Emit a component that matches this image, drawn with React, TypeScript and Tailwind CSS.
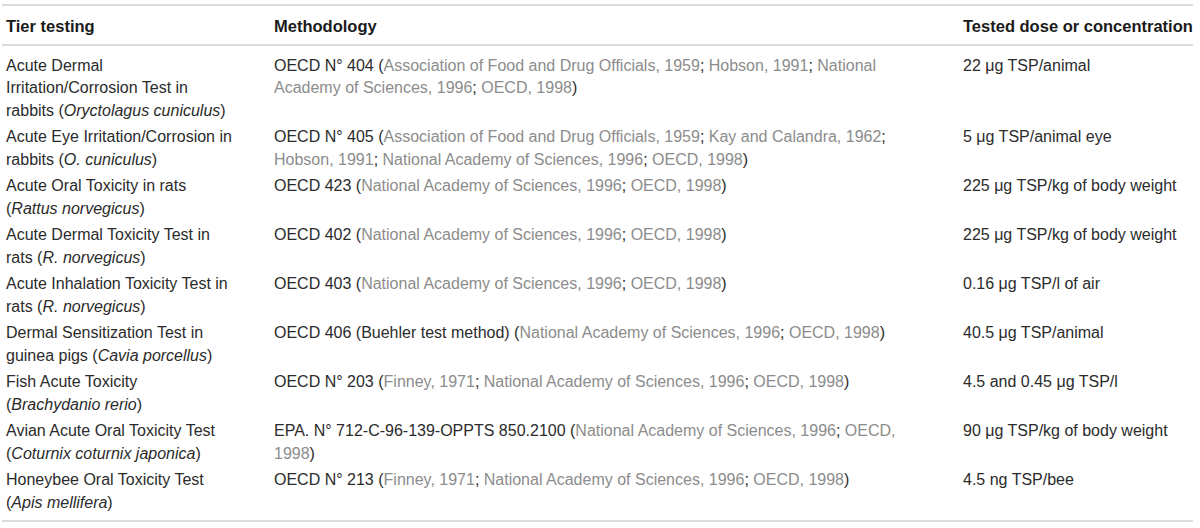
const ROWS: { tier: React.ReactNode; method: React.ReactNode; dose: React.ReactNode }[] = [
  {
    tier: (
      <>
        Acute Dermal
        <br />
        Irritation/Corrosion Test in
        <br />
        rabbits (<i>Oryctolagus cuniculus</i>)
      </>
    ),
    method: (
      <>
        OECD N° 404 (<Cite>Association of Food and Drug Officials, 1959</Cite>; <Cite>Hobson, 1991</Cite>;{' '}
        <Cite>National</Cite>
        <br />
        <Cite>Academy of Sciences, 1996</Cite>; <Cite>OECD, 1998</Cite>)
      </>
    ),
    dose: '22 μg TSP/animal',
  },
  {
    tier: (
      <>
        Acute Eye Irritation/Corrosion in
        <br />
        rabbits (<i>O. cuniculus</i>)
      </>
    ),
    method: (
      <>
        OECD N° 405 (<Cite>Association of Food and Drug Officials, 1959</Cite>; <Cite>Kay and Calandra, 1962</Cite>;
        <br />
        <Cite>Hobson, 1991</Cite>; <Cite>National Academy of Sciences, 1996</Cite>; <Cite>OECD, 1998</Cite>)
      </>
    ),
    dose: '5 μg TSP/animal eye',
  },
  {
    tier: (
      <>
        Acute Oral Toxicity in rats
        <br />(<i>Rattus norvegicus</i>)
      </>
    ),
    method: (
      <>
        OECD 423 (<Cite>National Academy of Sciences, 1996</Cite>; <Cite>OECD, 1998</Cite>)
      </>
    ),
    dose: '225 μg TSP/kg of body weight',
  },
  {
    tier: (
      <>
        Acute Dermal Toxicity Test in
        <br />
        rats (<i>R. norvegicus</i>)
      </>
    ),
    method: (
      <>
        OECD 402 (<Cite>National Academy of Sciences, 1996</Cite>; <Cite>OECD, 1998</Cite>)
      </>
    ),
    dose: '225 μg TSP/kg of body weight',
  },
  {
    tier: (
      <>
        Acute Inhalation Toxicity Test in
        <br />
        rats (<i>R. norvegicus</i>)
      </>
    ),
    method: (
      <>
        OECD 403 (<Cite>National Academy of Sciences, 1996</Cite>; <Cite>OECD, 1998</Cite>)
      </>
    ),
    dose: '0.16 μg TSP/l of air',
  },
  {
    tier: (
      <>
        Dermal Sensitization Test in
        <br />
        guinea pigs (<i>Cavia porcellus</i>)
      </>
    ),
    method: (
      <>
        OECD 406 (Buehler test method) (<Cite>National Academy of Sciences, 1996</Cite>; <Cite>OECD, 1998</Cite>)
      </>
    ),
    dose: '40.5 μg TSP/animal',
  },
  {
    tier: (
      <>
        Fish Acute Toxicity
        <br />(<i>Brachydanio rerio</i>)
      </>
    ),
    method: (
      <>
        OECD N° 203 (<Cite>Finney, 1971</Cite>; <Cite>National Academy of Sciences, 1996</Cite>; <Cite>OECD, 1998</Cite>)
      </>
    ),
    dose: '4.5 and 0.45 μg TSP/l',
  },
  {
    tier: (
      <>
        Avian Acute Oral Toxicity Test
        <br />(<i>Coturnix coturnix japonica</i>)
      </>
    ),
    method: (
      <>
        EPA. N° 712-C-96-139-OPPTS 850.2100 (<Cite>National Academy of Sciences, 1996</Cite>; <Cite>OECD,</Cite>
        <br />
        <Cite>1998</Cite>)
      </>
    ),
    dose: '90 μg TSP/kg of body weight',
  },
  {
    tier: (
      <>
        Honeybee Oral Toxicity Test
        <br />(<i>Apis mellifera</i>)
      </>
    ),
    method: (
      <>
        OECD N° 213 (<Cite>Finney, 1971</Cite>; <Cite>National Academy of Sciences, 1996</Cite>; <Cite>OECD, 1998</Cite>)
      </>
    ),
    dose: '4.5 ng TSP/bee',
  },
]

function Cite({ children }: { children: React.ReactNode }) {
  return <span className="text-[#8c8c8c]">{children}</span>
}

export default function App() {
  return (
    <div className="w-[1200px] h-[528px] bg-white pt-1 pl-[2px] font-['Liberation_Sans',Arial,sans-serif] text-[16px] leading-[22.5px] text-[#2b2b2b] overflow-hidden">
      <div className="w-[1191px] border-t-2 border-b-2 border-[#dcdcdc]">
        <div className="grid grid-cols-[268px_689px_1fr] pl-1 pt-[9px] pb-[6px] border-b-2 border-[#dcdcdc] font-bold text-[16.5px] text-[#1a1a1a] whitespace-nowrap">
          <div>Tier testing</div>
          <div>Methodology</div>
          <div>Tested dose or concentration</div>
        </div>
        <div className="pt-[7px] pb-[4px]">
          {ROWS.map((row, i) => (
            <div key={i} className="grid grid-cols-[268px_689px_1fr] pl-1 py-[2px] whitespace-nowrap">
              <div>{row.tier}</div>
              <div>{row.method}</div>
              <div>{row.dose}</div>
            </div>
          ))}
        </div>
      </div>
    </div>
  )
}
